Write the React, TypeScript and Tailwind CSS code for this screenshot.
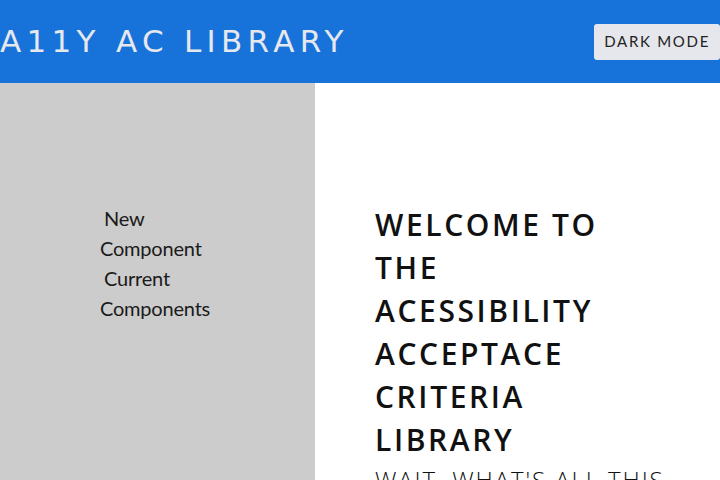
export default function App() {
  return (
    <div className="w-[720px] h-[480px] overflow-hidden flex flex-col bg-white">
      {/* Header */}
      <header className="h-[83px] shrink-0 bg-[#1773d9] flex items-center justify-between">
        <h1 className="text-[31px] font-normal tracking-[5.3px] text-[#e6e8ee] font-['DejaVu_Sans',sans-serif] leading-none">
          A11Y AC LIBRARY
        </h1>
        <button className="h-9 px-[10px] rounded-[3px] bg-[#e6e7ec] text-[#222] text-[15px] tracking-[1.7px] font-['Lato',sans-serif]">
          DARK MODE
        </button>
      </header>

      <div className="flex flex-1 min-h-0">
        {/* Sidebar */}
        <nav className="w-[315px] shrink-0 bg-[#cccccc] pt-[120px] pl-[100px]">
          <ul className="w-[115px] text-[20px] leading-[30px] tracking-[-0.2px] text-[#1a1a1a] font-['Lato',sans-serif]">
            <li className="indent-1">New Component</li>
            <li className="indent-1">Current Components</li>
          </ul>
        </nav>

        {/* Main */}
        <main className="flex-1 pt-[120px] pl-[60px] font-['Open_Sans',sans-serif]">
          <h2 className="w-[275px] text-[30px] font-semibold leading-[43px] tracking-[2.6px] text-[#111]">
            WELCOME TO THE ACESSIBILITY ACCEPTACE CRITERIA LIBRARY
          </h2>
          <p className="mt-[4px] text-[24px] font-light leading-[30px] tracking-[1.9px] text-[#111] whitespace-nowrap">
            WAIT, WHAT'S ALL THIS
          </p>
        </main>
      </div>
    </div>
  );
}
